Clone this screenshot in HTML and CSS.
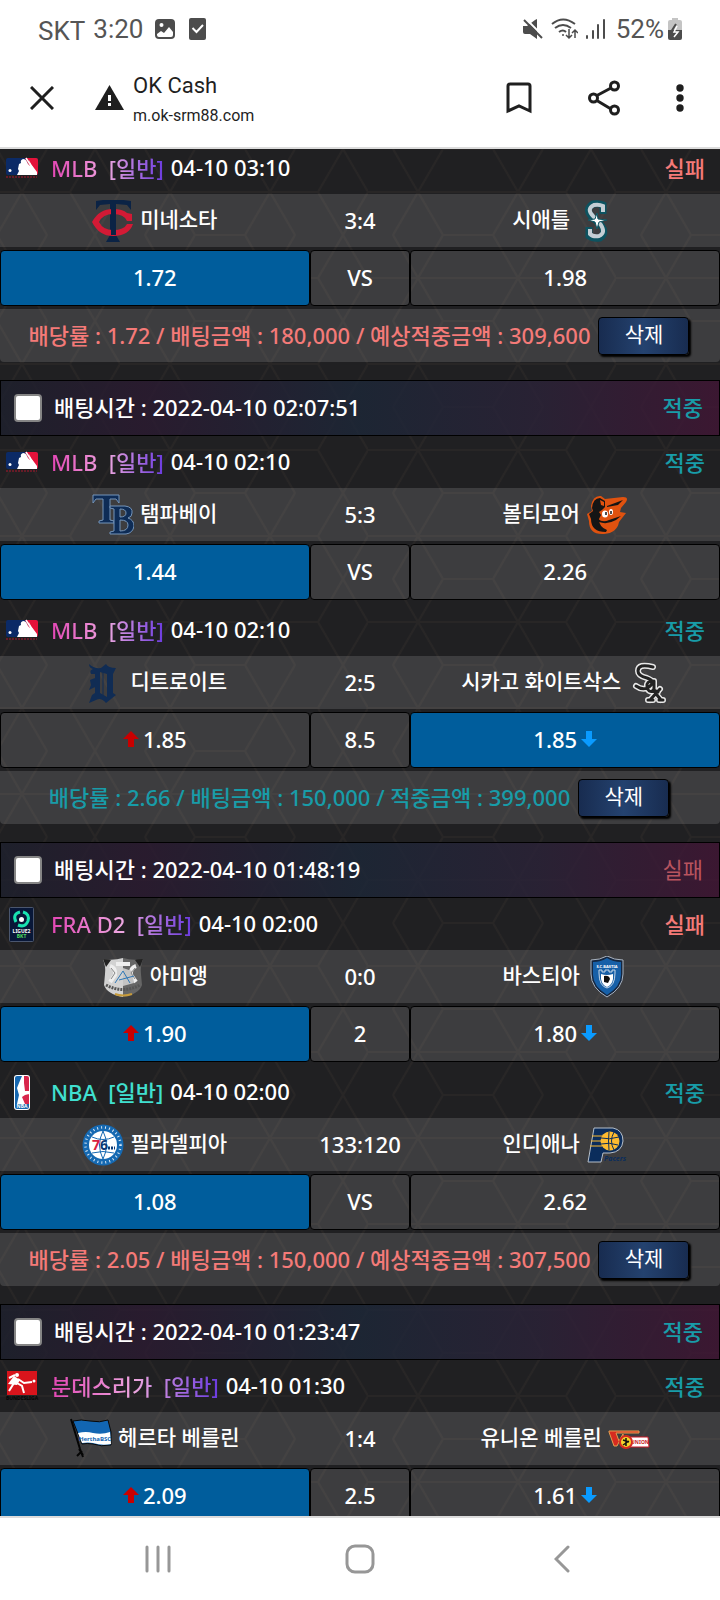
FILE: index.html
```html
<!DOCTYPE html>
<html lang="ko">
<head>
  <meta charset="UTF-8">
  <meta name="viewport" content="width=device-width, initial-scale=1.0">
  <title>OK Cash</title>
  <link rel="stylesheet" href="styles.css">
</head>
<body>

  <!-- Shared icons -->
  <svg class="sprite" aria-hidden="true">
    <symbol id="mlb" viewBox="0 0 34 22">
      <rect x="1" y="1" width="32" height="17" rx="2" fill="#0b2a66"/>
      <path d="M20 1h11q2 0 2 2v13q0 2-2 2h-3z" fill="#e4123a"/>
      <path d="M12 18l2-4-1-2 1-5 2-1q-1-3 2-4 3 0 4 3l1 2 2 2-1-6 2 4 6 8 0 3z" fill="#fff"/>
      <path d="M21 1l9 14" stroke="#fff" stroke-width="1.5"/>
      <circle cx="5" cy="13.500" r="1.500" fill="#fff"/>
      <path d="M1 20h31" stroke="#7d1a2a" stroke-width="1.500" stroke-dasharray="2 1"/>
    </symbol>
    <symbol id="up" viewBox="0 0 16 16"><path d="M8 0l8 8h-5v8H5V8H0z" fill="#c80000"/></symbol>
    <symbol id="down" viewBox="0 0 16 16"><path d="M8 16l8-8h-5V0H5v8H0z" fill="#0a9bff"/></symbol>
  </svg>

  <header>
    <div class="status-bar">
      <div class="status-left">
        <span class="carrier">SKT</span>
        <span>3:20</span>
        <svg class="s-image" width="20" height="20" viewBox="0 0 20 20"><rect width="20" height="20" rx="4" fill="#4c4c4c"/><circle cx="6.500" cy="6" r="2" fill="#fff"/><path d="M2 15l4-3 3 2 5-6 4 5v3q0 2-2 2H4q-2 0-2-2z" fill="#fff"/></svg>
        <svg width="17" height="22" viewBox="0 0 17 22"><rect width="17" height="22" rx="2" fill="#4c4c4c"/><path d="M3.500 10l4 4L14 7" fill="none" stroke="#fff" stroke-width="2"/></svg>
      </div>
      <div class="status-right">
        <svg width="20" height="22" viewBox="0 0 20 22"><path d="M0 8h4l8-6 2-1v20l-7-5H2q-2 0-2-2z" fill="#4c4c4c"/><path d="M2 0l18 18" stroke="#fff" stroke-width="2"/><path d="M1 2l18 18" stroke="#4c4c4c" stroke-width="2"/></svg>
        <svg width="27" height="22" viewBox="0 0 27 22" fill="none" stroke="#4c4c4c" stroke-width="2"><path d="M1 6q11-9 23 0M4 10q8-6 16 0M8 14q4-3 7 0"/><circle cx="12" cy="17" r="1" fill="#4c4c4c" stroke="none"/><path d="M18 11v9m-3-3l3 3 3-3M24 20v-8m-3 3l3-3 3 3" stroke-width="1.500"/></svg>
        <svg width="19" height="20" viewBox="0 0 19 20" fill="none" stroke="#4c4c4c" stroke-width="2" stroke-linecap="round"><path d="M1 17v2M7 12v7M12 6v13M18 1v18"/></svg>
        <span class="battery-text">52%</span>
        <svg class="battery" width="14" height="22" viewBox="0 0 14 22"><path d="M4 0h6v2h2q2 0 2 2v8H0V4q0-2 2-2h2z" fill="#c4c4c4"/><path d="M0 12h14v8q0 2-2 2H2q-2 0-2-2z" fill="#4c4c4c"/><path d="M8 6l-5 8h4l-1 5" fill="none" stroke="#4c4c4c" stroke-width="2"/><path d="M9 8l-3 6h4l-4 5" fill="none" stroke="#fff" stroke-width="1.500"/></svg>
      </div>
    </div>
    <div class="browser-bar">
      <button class="icon-btn" aria-label="닫기"><svg width="24" height="24" viewBox="0 0 24 24"><path d="M1 1l22 22M23 1L1 23" stroke="#1f1f1f" stroke-width="3"/></svg></button>
      <svg class="warning" width="29" height="25" viewBox="0 0 29 25"><path d="M14.500 0L29 25H0z" fill="#1f1f1f"/><path d="M14.500 10v6M14.500 18v3" stroke="#fff" stroke-width="3"/></svg>
      <div class="site">
        <div class="site-title">OK Cash</div>
        <div class="site-url">m.ok-srm88.com</div>
      </div>
      <button class="icon-btn" aria-label="북마크"><svg width="26" height="32" viewBox="0 0 26 32"><path d="M2 29V4q0-2 2-2h18q2 0 2 2v25l-11-5z" fill="none" stroke="#1f1f1f" stroke-width="3"/></svg></button>
      <button class="icon-btn" aria-label="공유"><svg width="32" height="36" viewBox="0 0 32 36" fill="none" stroke="#1f1f1f" stroke-width="3"><path d="M8 16l15-8M8 20l15 9"/><circle cx="5.500" cy="18" r="4"/><circle cx="26.500" cy="6" r="4"/><circle cx="26.500" cy="30" r="4"/></svg></button>
      <button class="icon-btn" aria-label="메뉴"><svg width="8" height="28" viewBox="0 0 8 28" fill="#1f1f1f"><circle cx="4" cy="4" r="3.700"/><circle cx="4" cy="14" r="3.700"/><circle cx="4" cy="24" r="3.700"/></svg></button>
    </div>
  </header>

  <main>
    <section class="slip first">
      <div class="league">
        <span class="league-icon"><svg width="34" height="22"><use href="#mlb"/></svg></span>
        <span class="league-name">MLB&nbsp; [일반]</span>
        <span class="date">04-10 03:10</span>
        <span class="lose">실패</span>
      </div>
      <div class="match">
        <div class="team">
          <svg class="logo" viewBox="0 0 42 42"><path d="M4 1q17-3 35 0v9l-4-5-11-1v31l4 7H14l4-7V4L8 5l-4 5z" fill="#0b2345"/><path d="M40 14v7h-5q-3-7-14-7-10 0-14 8 4 8 14 8 11 0 14-6h6q-4 12-20 12Q7 36 0 22 7 9 21 9q10 0 14 4z" fill="#d31a35"/><path d="M19 4h5v31h-5z" fill="#0b2345"/></svg>
          <span>미네소타</span>
        </div>
        <div class="score">3:4</div>
        <div class="team">
          <span>시애틀</span>
          <svg class="logo" viewBox="0 0 42 42"><path d="M27 14V5q-4-2-10-1-8 5-2 12l10 9q6 8-1 13-7 1-11-2v-9" fill="none" stroke="#0d5360" stroke-width="7"/><path d="M27 12V6q-4-2-9-1-8 4-1 11l8 9q5 8-2 11-6 1-9-2v-5" fill="none" stroke="#c4ced4" stroke-width="4"/><path d="M21 13l1 6 9 1-8 2-2 7-2-7-7-2 7-1z" fill="#fff" stroke="#0d5360"/></svg>
        </div>
      </div>
      <div class="odds">
        <div class="odd picked">1.72</div>
        <div class="odd">VS</div>
        <div class="odd">1.98</div>
      </div>
      <div class="result lose">
        <span>배당률 : 1.72 / 배팅금액 : 180,000 / 예상적중금액 : 309,600</span>
        <button class="delete">삭제</button>
      </div>
    </section>

    <section class="slip">
      <div class="slip-head">
        <input type="checkbox" id="slip1">
        <label for="slip1">배팅시간 : 2022-04-10 02:07:51</label>
        <span class="win">적중</span>
      </div>
      <div class="league">
        <span class="league-icon"><svg width="34" height="22"><use href="#mlb"/></svg></span>
        <span class="league-name">MLB&nbsp; [일반]</span>
        <span class="date">04-10 02:10</span>
        <span class="win">적중</span>
      </div>
      <div class="match">
        <div class="team">
          <svg class="logo" viewBox="0 0 42 42"><g fill="#0e2c56" stroke="#7595ba"><path d="M1 1h26v8l-3-4h-6v21l4 1v2H7v-2l4-1V5H4L1 9z"/><path fill-rule="evenodd" d="M18 12h15q8 1 7 7 0 4-4 5 6 2 6 8-1 7-8 8H18v-2l4-1V15l-4-1zm10 3v8q6 0 6-4t-6-4zm0 11v11q8 0 8-6 0-5-8-5z"/></g></svg>
          <span>탬파베이</span>
        </div>
        <div class="score">5:3</div>
        <div class="team">
          <span>볼티모어</span>
          <svg class="logo" viewBox="0 0 42 42"><path d="M5 12Q7 1 15 2l4 3 18-2q6 0 3 5l-5 6-1 4 6 1-7 9q-2 11-15 12Q3 41 3 27l-2-7 5-3z" fill="#e0520f"/><path d="M6 14Q7 4 14 4l5 3v6l-3 3-3 2 2 3-2 4q0 8 8 11l-1 2Q5 38 5 25l-2-5 4-3z" fill="#151515"/><path d="M21 12l16-6-5 5-11 2z" fill="#151515"/><path d="M14 6l4 2v4l-3-1z" fill="#e0520f"/><ellipse cx="19" cy="20" rx="3" ry="3.500" fill="#fff"/><ellipse cx="25" cy="18" rx="2" ry="3" fill="#fff"/><path d="M20 18v3M25 17v3" stroke="#151515" stroke-width="1.500"/><path d="M12 25q5 4 11 1l12-4-5 4q-9 5-17 2z" fill="#151515"/></svg>
        </div>
      </div>
      <div class="odds">
        <div class="odd picked">1.44</div>
        <div class="odd">VS</div>
        <div class="odd">2.26</div>
      </div>
      <div class="league next">
        <span class="league-icon"><svg width="34" height="22"><use href="#mlb"/></svg></span>
        <span class="league-name">MLB&nbsp; [일반]</span>
        <span class="date">04-10 02:10</span>
        <span class="win">적중</span>
      </div>
      <div class="match">
        <div class="team">
          <svg class="logo" viewBox="0 0 42 42"><path d="M7 2q5 5 12 4l5-4q2 4 10 4l-3 6v19l3 2-10 8q-5-6-10-3l-7 3 3-8 3-2V12H9q-2-4 2-5Q7 6 7 2zm11 8v21l7 4V12zM8 18l5-2v9l-6 3 2-5z" fill="#102c54" fill-rule="evenodd"/><path d="M17 8v25M21 8v26" stroke="#102c54"/></svg>
          <span>디트로이트</span>
        </div>
        <div class="score">2:5</div>
        <div class="team">
          <span>시카고 화이트삭스</span>
          <svg class="logo" viewBox="0 0 42 42"><g fill="none" stroke-linecap="round" stroke-linejoin="round"><g stroke="#e8e8e8" stroke-width="6"><path d="M26 5q-15-4-15 4 0 5 9 7 9 3 2 9-6 4-13-1M26 19q-7 0-6 6t7 4V19v9l4 2M26 28l8 10M33 27L23 38M32 38h4M21 38h5"/></g><g stroke="#222" stroke-width="3"><path d="M26 5q-15-4-15 4 0 5 9 7 9 3 2 9-6 4-13-1M26 19q-7 0-6 6t7 4V19v9l4 2M26 28l8 10M33 27L23 38M32 38h4M21 38h5"/></g></g></svg>
        </div>
      </div>
      <div class="odds">
        <div class="odd"><svg class="arrow up"><use href="#up"/></svg>1.85</div>
        <div class="odd">8.5</div>
        <div class="odd picked">1.85<svg class="arrow down"><use href="#down"/></svg></div>
      </div>
      <div class="result win">
        <span>배당률 : 2.66 / 배팅금액 : 150,000 / 적중금액 : 399,000</span>
        <button class="delete">삭제</button>
      </div>
    </section>

    <section class="slip">
      <div class="slip-head">
        <input type="checkbox" id="slip2">
        <label for="slip2">배팅시간 : 2022-04-10 01:48:19</label>
        <span class="lose dim">실패</span>
      </div>
      <div class="league">
        <span class="league-icon"><svg width="25" height="35" viewBox="0 0 25 35"><rect x=".5" y=".5" width="24" height="34" rx="1" fill="#081738" stroke="#4a566e"/><path d="M7 15q-4-8 4-10M14 5q7 2 5 9-3 7-10 4" fill="none" stroke="#19e3b1" stroke-width="3"/><circle cx="12.500" cy="12.500" r="2.500" fill="#fff"/><text x="12.500" y="26" class="tiny" fill="#fff">LIGUE2</text><text x="12.500" y="31" class="tiny" fill="#4fdf5f">BKT</text></svg></span>
        <span class="league-name">FRA D2&nbsp; [일반]</span>
        <span class="date">04-10 02:00</span>
        <span class="lose">실패</span>
      </div>
      <div class="match">
        <div class="team">
          <svg class="logo" viewBox="0 0 42 42"><path d="M1 3q10 2 20-1v39Q5 38 2 29l1-11q1-7-2-15z" fill="#d2d2d2"/><path d="M21 2q10 3 20 1-3 8-2 15l1 11q-3 9-19 12z" fill="#666"/><path d="M1 3q6 0 8 1l-5 7zM41 3q-6 0-8 1l5 7z" fill="#222"/><path d="M8 10q6 2 5 9l-5 7M34 10q-6 2-5 9l5 7M14 8h14" fill="none" stroke="#eee" stroke-width="4"/><path d="M21 12l9 3 2 12-11 3z" fill="#c4c4c4"/><path d="M9 12l4 5-4 6M33 12l-4 5 4 6" fill="none" stroke="#888"/><path d="M13 27l8-12 7 12M17 24l15-4" fill="none" stroke="#2f78b7"/><path d="M4 29q17 9 34 0" fill="none" stroke="#555" stroke-width="3" stroke-dasharray="2 1"/><path d="M13 38q8 3 17 0" fill="none" stroke="#c79b3b" stroke-width="2"/></svg>
          <span>아미앵</span>
        </div>
        <div class="score">0:0</div>
        <div class="team">
          <span>바스티아</span>
          <svg class="logo" viewBox="0 0 42 42"><path d="M5 4q9 0 16-4 7 4 16 4v14q0 14-16 23Q5 32 5 18z" fill="#15263f" stroke="#a9b3c0"/><path d="M7 6q8 0 14-4 6 4 14 4v13q0 11-14 20Q7 30 7 19z" fill="#1760a8"/><text x="21" y="12" class="crest">S.C.BASTIA</text><path d="M13 17v-3h3v2h3v-2h4v2h3v-2h3v3q0 13-8 15-8-2-8-15z" fill="#1760a8" stroke="#c8d8e8"/><path d="M15 18q6 2 12 0v5q-1 6-6 8-5-2-6-8z" fill="#fff"/><path d="M18 20q5-1 6 3l-2 4-4-1z" fill="#111"/></svg>
        </div>
      </div>
      <div class="odds">
        <div class="odd picked"><svg class="arrow up"><use href="#up"/></svg>1.90</div>
        <div class="odd">2</div>
        <div class="odd">1.80<svg class="arrow down"><use href="#down"/></svg></div>
      </div>
      <div class="league next">
        <span class="league-icon"><svg width="16" height="35" viewBox="0 0 16 35"><rect width="16" height="35" rx="3" fill="#fff"/><path d="M3 1h5L5 8 3 13l2 7-2 9H1V3q0-2 2-2z" fill="#1667b0"/><path d="M10 1h3q2 0 2 2v26h-4l-3-7 3-2 4-1v-3h-4l-1-8z" fill="#d8254b"/><path d="M1 29h14v3q0 2-2 2H3q-2 0-2-2z" fill="#1667b0"/><text x="8" y="33" class="tiny" fill="#fff">NBA</text></svg></span>
        <span class="league-name nba">NBA&nbsp; [일반]</span>
        <span class="date">04-10 02:00</span>
        <span class="win">적중</span>
      </div>
      <div class="match">
        <div class="team">
          <svg class="logo" viewBox="0 0 42 42"><circle cx="21" cy="21" r="20.500" fill="#1569b2"/><circle cx="21" cy="21" r="17.500" fill="none" stroke="#dbe8f4" stroke-width="2.500" stroke-dasharray="1 3"/><circle cx="21" cy="21" r="14" fill="#fff"/><path d="M10 13q11 5 22 0M10 29q11-3 22 0M21 7q-7 14 0 28M21 7q7 14 0 28" fill="none" stroke="#1569b2"/><text x="14" y="26" class="seven">7</text><text x="22" y="26" class="six">6</text><path d="M26 24h7" stroke="#0d3b77" stroke-width="3" stroke-dasharray="2 1"/></svg>
          <span>필라델피아</span>
        </div>
        <div class="score">133:120</div>
        <div class="team">
          <span>인디애나</span>
          <svg class="logo" viewBox="0 0 42 42"><path d="M8 4h19q10 2 10 13-1 11-13 12h-7l-2 9H2z" fill="#0b2d5c" stroke="#b7c0ca"/><circle cx="24" cy="17" r="9.500" fill="#fdbb30"/><path d="M6 12h11M5 17h11M4 22h12" stroke="#fdbb30"/><path d="M15 14q8 2 18-1M15 20q8-2 17 1M28 8q-5 9 0 18M23 8q-1 9 0 18" fill="none" stroke="#0b2d5c"/><text x="29" y="37" class="pacers">Pacers</text></svg>
        </div>
      </div>
      <div class="odds">
        <div class="odd picked">1.08</div>
        <div class="odd">VS</div>
        <div class="odd">2.62</div>
      </div>
      <div class="result lose">
        <span>배당률 : 2.05 / 배팅금액 : 150,000 / 예상적중금액 : 307,500</span>
        <button class="delete">삭제</button>
      </div>
    </section>

    <section class="slip">
      <div class="slip-head">
        <input type="checkbox" id="slip3">
        <label for="slip3">배팅시간 : 2022-04-10 01:23:47</label>
        <span class="win">적중</span>
      </div>
      <div class="league">
        <span class="league-icon"><svg width="34" height="30" viewBox="0 0 34 30"><rect x="2" width="30" height="24" fill="#d8141c"/><circle cx="12" cy="4" r="2" fill="#fff"/><path d="M9 5l6 4-3 5-9-1z" fill="#fff"/><path d="M4 7l6-3M9 12l-5 8M12 12l5 3 2 7M13 8l6 4 8-1" fill="none" stroke="#fff" stroke-width="2"/><circle cx="29" cy="10" r="1.500" fill="#fff"/><text x="17" y="29" class="tiny" fill="#050505">BUNDESLIGA</text></svg></span>
        <span class="league-name">분데스리가&nbsp; [일반]</span>
        <span class="date">04-10 01:30</span>
        <span class="win">적중</span>
      </div>
      <div class="match">
        <div class="team">
          <svg class="logo" viewBox="0 0 42 42"><path d="M3 3q8-2 17 0 10 2 18-1l3 12v13q-10 2-18-1-6-1-11 0z" fill="#1266b3" stroke="#080808"/><path d="M8 15q8-2 15 0 9 2 17-1l1 12q-9 2-18-1-5-1-11 0z" fill="#fff"/><text x="25" y="23" class="hertha">HerthaBSC</text><path d="M1 1l9 30 3 8M9 31l4 6M7 38l5-5" fill="none" stroke="#050505" stroke-width="2"/></svg>
          <span>헤르타 베를린</span>
        </div>
        <div class="score">1:4</div>
        <div class="team">
          <span>유니온 베를린</span>
          <svg class="logo" viewBox="0 0 42 42"><path d="M1 14l5 14h3l4-8 1 8h3l3-9-2-1-2 5-1-7-4 7-3-8h23v-2H1z" fill="#d72b20" stroke="#e4a04f"/><path d="M22 19h18l1 10H22z" fill="#fff" stroke="#c71826"/><text x="32" y="26" class="union">UNION</text><circle cx="18" cy="24" r="6" fill="#f4d42c" stroke="#d72b20" stroke-width="2"/><path d="M18 20v8M15 22l6 2M15 27l6-4" stroke="#111" stroke-width="1.500"/></svg>
        </div>
      </div>
      <div class="odds">
        <div class="odd picked"><svg class="arrow up"><use href="#up"/></svg>2.09</div>
        <div class="odd">2.5</div>
        <div class="odd">1.61<svg class="arrow down"><use href="#down"/></svg></div>
      </div>
    </section>
  </main>

  <nav class="bottom-nav">
    <button class="icon-btn" aria-label="최근 앱"><svg width="26" height="28" viewBox="0 0 26 28"><path d="M2 2v24M13 2v24M24 2v24" stroke="#979797" stroke-width="3" stroke-linecap="round"/></svg></button>
    <button class="icon-btn" aria-label="홈"><svg width="30" height="30" viewBox="0 0 30 30"><rect x="2" y="2" width="26" height="26" rx="8" fill="none" stroke="#979797" stroke-width="3"/></svg></button>
    <button class="icon-btn" aria-label="뒤로"><svg width="16" height="28" viewBox="0 0 16 28"><path d="M14 2L2 14l12 12" fill="none" stroke="#979797" stroke-width="3" stroke-linecap="round"/></svg></button>
  </nav>

</body>
</html>
```
FILE: styles.css
```css
* { box-sizing: border-box; }
body { display: flex; flex-direction: column; height: 100vh; margin: 0; overflow: hidden; background-color: #fff; font-family: "Noto Sans", "Noto Sans CJK KR", sans-serif; font-size: 22px; font-weight: 500; }
svg { display: block; flex-shrink: 0; }
.sprite { position: absolute; width: 0; height: 0; }
button { font-family: inherit; cursor: pointer; }
.icon-btn { display: flex; align-items: center; justify-content: center; padding: 0; border: none; background: none; }

/* Browser header */
header { flex-shrink: 0; border-bottom: 2px solid #dcdcdc; font-family: Roboto, sans-serif; font-weight: 400; }
.status-bar { display: flex; justify-content: space-between; height: 58px; padding: 0 38px; color: #555; font-size: 26px; line-height: 58px; }
.status-left, .status-right { display: flex; align-items: center; gap: 8px; }
.carrier { padding-top: 3px; }
.s-image { margin: 0 6px 0 4px; }
.battery-text { margin-left: 3px; }
.battery { margin-left: -4px; }
.browser-bar { display: flex; align-items: center; height: 89px; padding: 0 36px 10px 30px; color: #1f1f1f; }
.warning { margin: 0 9px 0 41px; }
.site { flex: 1; padding-top: 6px; }
.site-title { font-size: 22px; line-height: 30px; }
.site-url { font-size: 16px; line-height: 30px; }
.browser-bar .icon-btn + .icon-btn { margin-left: 56px; }

/* Betting list */
main {
  flex: 1;
  min-height: 0;
  overflow: hidden;
  background-color: #202022;
  background-image: url("data:image/svg+xml,%3Csvg xmlns='http://www.w3.org/2000/svg' width='248' height='86'%3E%3Cpath d='M0 43h198M25 0l50 86M75 0L25 86M125 0l50 86M175 0l-50 86M198 43L223 0l25 43-25 43zM75 0h50M75 86h50' fill='none' stroke='%23c8a078' stroke-opacity='.05' stroke-width='2'/%3E%3C/svg%3E");
  background-position: 120px 0;
  color: #fff;
}
.slip { margin-bottom: 18px; }
.first { margin-top: -7px; }
.slip-head { display: flex; align-items: center; height: 56px; padding: 0 16px 0 13px; border: 1px solid #000; background: linear-gradient(90deg, #1d202dcc, #2b1a31cc 20%, #1c2738cc 50%, #2b2238cc 75%, #421535cc); }
.slip-head input { appearance: none; width: 28px; height: 28px; margin: 0 12px 0 0; border: 2px solid #858585; border-radius: 4px; background-color: #fff; }
.slip-head label { flex: 1; }
.slip-head label, .slip-head span { padding-bottom: 5px; }
.league { display: flex; align-items: center; height: 52px; padding-right: 15px; }
.league > span { padding-bottom: 2px; }
.next { margin-top: 4px; }
.league .league-icon { display: flex; justify-content: center; width: 43px; margin-right: 8px; padding-bottom: 0; }
.league-name { background: linear-gradient(90deg, #e346b4, #eda6e0 50%, #6a3ae0); background-clip: text; -webkit-background-clip: text; color: transparent; }
.league-name.nba { background: none; color: #40e0d0; }
.date { flex: 1; margin-left: 7px; }
.win { color: #189ca8; }
.lose { color: #f47a78; }
.dim { color: #b8545f; font-weight: 400; }
.match, .odds { display: grid; grid-template-columns: 43fr 14fr 43fr; }
.match { height: 53px; background-color: #ffffff22; }
.team, .score, .odd { display: flex; align-items: center; justify-content: center; min-width: 0; white-space: nowrap; }
.team { gap: 6px; font-size: 21px; }
.team span { padding-bottom: 5px; }
.score { padding-bottom: 2px; }
.logo { width: 42px; height: 42px; }
.odds { height: 56px; margin-top: 3px; }
.odd { padding-bottom: 2px; border: 1px solid #000; border-radius: 4px; background-color: #ffffff22; }
.picked { background-color: #005d9c; }
.arrow { width: 16px; height: 16px; }
.up { margin-right: 4px; }
.down { margin-left: 4px; }
.result { display: flex; align-items: center; justify-content: center; gap: 8px; height: 53px; margin-top: 3px; padding-right: 2px; border-radius: 0 0 4px 4px; background-color: #ffffff22; white-space: nowrap; }
.result span { padding-bottom: 4px; }
.delete { width: 91px; height: 38px; padding: 0 0 3px; border: 1px solid #000; border-radius: 4px; background: linear-gradient(90deg, #182c50, #24426f 50%, #182c50); box-shadow: 2px 2px 2px #000; color: #fff; font-size: 21px; line-height: 30px; }

/* Text inside the crests */
.tiny { font-size: 5px; font-weight: 700; text-anchor: middle; }
.crest { fill: #fff; font-size: 4px; font-weight: 700; text-anchor: middle; }
.seven, .six { fill: #d8203f; font-size: 14px; font-weight: 700; text-anchor: middle; }
.six { fill: #0d3b77; }
.pacers { fill: #0b2d5c; font-size: 7px; font-style: italic; font-weight: 700; text-anchor: middle; }
.hertha { fill: #1266b3; font-size: 6px; font-weight: 700; text-anchor: middle; }
.union { fill: #c71826; font-size: 5px; font-weight: 700; text-anchor: middle; }

/* Phone navigation */
.bottom-nav { display: grid; grid-template-columns: repeat(3, 1fr); flex-shrink: 0; height: 84px; padding: 0 8%; border-top: 2px solid #dcdcdc; background-color: #fff; }
```
